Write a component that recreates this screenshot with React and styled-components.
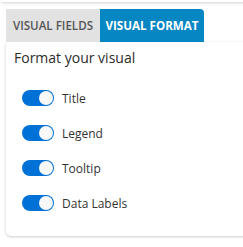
import React, { useState } from 'react';
import styled, { createGlobalStyle } from 'styled-components';

const GlobalStyle = createGlobalStyle`
  body {
    margin: 0;
    background: #ffffff;
    font-family: "Open Sans", "Liberation Sans", sans-serif;
    overflow: hidden;
  }
`;

const Page = styled.div`
  width: 243px;
  height: 247px;
  overflow: hidden;
`;

const UpperCard = styled.div`
  height: 2px;
  margin-left: 1px;
  width: 260px;
  background: #ffffff;
  border-radius: 0 0 4px 4px;
  box-shadow: 0 1px 3px rgba(0, 0, 0, 0.22);
`;

const Tabs = styled.div`
  display: flex;
  margin: 7px 0 0 6px;
`;

const Tab = styled.div`
  height: 33px;
  width: ${(p) => (p.$active ? '104px' : '94px')};
  display: flex;
  align-items: center;
  justify-content: center;
  font-size: 11.6px;
  font-weight: ${(p) => (p.$active ? 700 : 600)};
  color: ${(p) => (p.$active ? '#ffffff' : '#555555')};
  background: ${(p) => (p.$active ? '#0786c4' : '#e2e2e2')};
  border-radius: ${(p) => (p.$active ? '0 4px 0 0' : '0')};
  cursor: pointer;
  white-space: nowrap;
`;

const Panel = styled.div`
  margin-left: 6px;
  width: 260px;
  height: 194px;
  box-sizing: border-box;
  background: #ffffff;
  border-radius: 0 0 0 5px;
  box-shadow: 0 1px 3px rgba(0, 0, 0, 0.2);
  padding: 7px 0 0 8px;
`;

const Heading = styled.div`
  font-size: 14px;
  font-weight: 500;
  color: #2b2b2b;
  line-height: 18px;
`;

const List = styled.div`
  display: flex;
  flex-direction: column;
  gap: 19px;
  margin: 23px 0 0 8px;
`;

const Row = styled.label`
  display: flex;
  align-items: center;
  gap: 8px;
  height: 16px;
  font-size: 12px;
  color: #333333;
  cursor: pointer;
`;

const Switch = styled.span`
  position: relative;
  width: 32px;
  height: 16px;
  box-sizing: border-box;
  border-radius: 8px;
  background: ${(p) => (p.$on ? '#0071d7' : '#c8c8c8')};
  flex-shrink: 0;

  &::after {
    content: '';
    position: absolute;
    top: 1px;
    left: ${(p) => (p.$on ? '17px' : '1px')};
    width: 14px;
    height: 14px;
    box-sizing: border-box;
    border-radius: 50%;
    background: #f8f8f8;
  }
`;

const items = ['Title', 'Legend', 'Tooltip', 'Data Labels'];

export default function App() {
  const [state, setState] = useState(() => items.map(() => true));
  return (
    <Page>
      <GlobalStyle />
      <UpperCard />
      <Tabs>
        <Tab>VISUAL FIELDS</Tab>
        <Tab $active>VISUAL FORMAT</Tab>
      </Tabs>
      <Panel>
        <Heading>Format your visual</Heading>
        <List>
          {items.map((label, i) => (
            <Row key={label} onClick={() => setState((s) => s.map((v, j) => (j === i ? !v : v)))}>
              <Switch $on={state[i]} />
              {label}
            </Row>
          ))}
        </List>
      </Panel>
    </Page>
  );
}
